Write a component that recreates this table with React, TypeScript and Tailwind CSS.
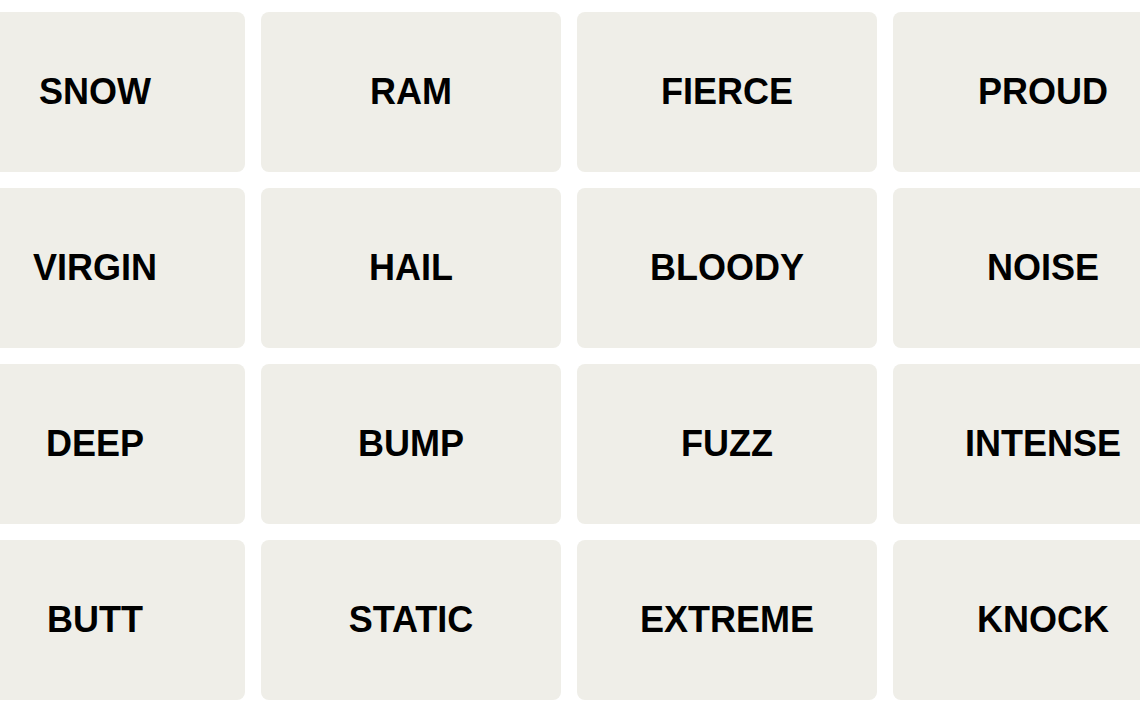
const words = [
  "SNOW", "RAM", "FIERCE", "PROUD",
  "VIRGIN", "HAIL", "BLOODY", "NOISE",
  "DEEP", "BUMP", "FUZZ", "INTENSE",
  "BUTT", "STATIC", "EXTREME", "KNOCK",
];

export default function App() {
  return (
    <div className="w-full h-[710px] bg-white overflow-hidden flex justify-center pt-3">
      <div className="grid grid-cols-[repeat(4,300px)] auto-rows-[160px] gap-4 shrink-0 -translate-x-px">
        {words.map((w) => (
          <Tile key={w} word={w} />
        ))}
      </div>
    </div>
  );
}

function Tile({ word }: { word: string }) {
  return (
    <button className="flex items-center justify-center rounded-lg bg-[#efeee8] text-black text-[36px] font-bold font-['Liberation_Sans',Arial,sans-serif] uppercase">
      {word}
    </button>
  );
}
